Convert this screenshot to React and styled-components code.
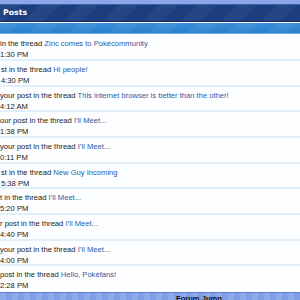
import React from 'react'
import styled, { createGlobalStyle } from 'styled-components'

const Global = createGlobalStyle`
  html, body { margin: 0; padding: 0; background: #fff; }
  body { width: 300px; height: 300px; overflow: hidden; font-family: "Liberation Sans", Arial, sans-serif; }
`

const Page = styled.div`
  width: 300px;
  height: 300px;
  display: flex;
  flex-direction: column;
  overflow: hidden;
`

const TopStrip = styled.div`
  height: 4px;
  background: #8ca6e8;
  border-bottom: 1px solid #3a5fae;
`

const TitleBar = styled.div`
  height: 16px;
  display: flex;
  align-items: center;
  padding-left: 3px;
  background:
    repeating-linear-gradient(135deg, rgba(255,255,255,0.04) 0 14px, rgba(255,255,255,0) 14px 28px),
    #1c3e7e;
  color: #fff;
  font-family: "DejaVu Sans", Verdana, sans-serif;
  font-weight: bold;
  font-size: 7.8px;
  border-bottom: 1px solid #0f2a5e;
`

const SubBar = styled.div`
  height: 11px;
  border-top: 1px solid #ffffff;
  background:
    repeating-linear-gradient(135deg, rgba(255,255,255,0.05) 0 14px, rgba(255,255,255,0) 14px 28px),
    linear-gradient(#3a8fd8, #2b7fcb);
  border-bottom: 1px solid #6aaae6;
`

const List = styled.div`
  flex: 1;
  display: flex;
  flex-direction: column;
  padding-top: 1px;
`

const Row = styled.div`
  height: 25.7px;
  box-sizing: border-box;
  padding: 3px 0 0 ${p => p.$indent || 0}px;
  border-bottom: 2px solid #e2eefa;
  background: #fdfeff;
  font-size: 7.6px;
  line-height: 11px;
  color: #1a1a1a;
  white-space: nowrap;
  &:last-child { border-bottom: none; }
`

const Line = styled.div``

const Link = styled.span`
  color: #2c5aa6;
`

const BottomBar = styled.div`
  height: 7px;
  border-top: 1px solid #5b7fd6;
  background:
    repeating-linear-gradient(90deg, rgba(255,255,255,0.12) 0 6px, rgba(255,255,255,0) 6px 12px),
    #7e9ee8;
  padding-left: 176px;
  font-size: 7.6px;
  font-weight: bold;
  color: #111;
  line-height: 12px;
  overflow: hidden;
`

const rows = [
  { pre: 'in the thread ', link: 'Zinc comes to Pokécommunity', time: '1:30 PM', indent: 0 },
  { pre: 'st in the thread ', link: 'Hi people!', time: '4:30 PM', indent: 1 },
  { pre: 'your post in the thread ', link: 'This internet browser is better than the other!', time: '4:12 AM', indent: 0 },
  { pre: 'our post in the thread ', link: 'I\u2019ll Meet...', time: '1:38 PM', indent: 0 },
  { pre: 'your post in the thread ', link: 'I\u2019ll Meet...', time: '0:11 PM', indent: 0 },
  { pre: 'st in the thread ', link: 'New Guy Incoming', time: '5:38 PM', indent: 1 },
  { pre: 't in the thread ', link: 'I\u2019ll Meet...', time: '5:20 PM', indent: 0 },
  { pre: 'r post in the thread ', link: 'I\u2019ll Meet...', time: '4:40 PM', indent: 0 },
  { pre: 'your post in the thread ', link: 'I\u2019ll Meet...', time: '4:00 PM', indent: 0 },
  { pre: 'post in the thread ', link: 'Hello, Pokéfans!', time: '2:28 PM', indent: 0 },
]

export default function App() {
  return (
    <Page>
      <Global />
      <TopStrip />
      <TitleBar>Posts</TitleBar>
      <SubBar />
      <List>
        {rows.map((r, i) => (
          <Row key={i} $indent={r.indent}>
            <Line>{r.pre}<Link>{r.link}</Link></Line>
            <Line>{r.time}</Line>
          </Row>
        ))}
      </List>
      <BottomBar>Forum Jump</BottomBar>
    </Page>
  )
}
